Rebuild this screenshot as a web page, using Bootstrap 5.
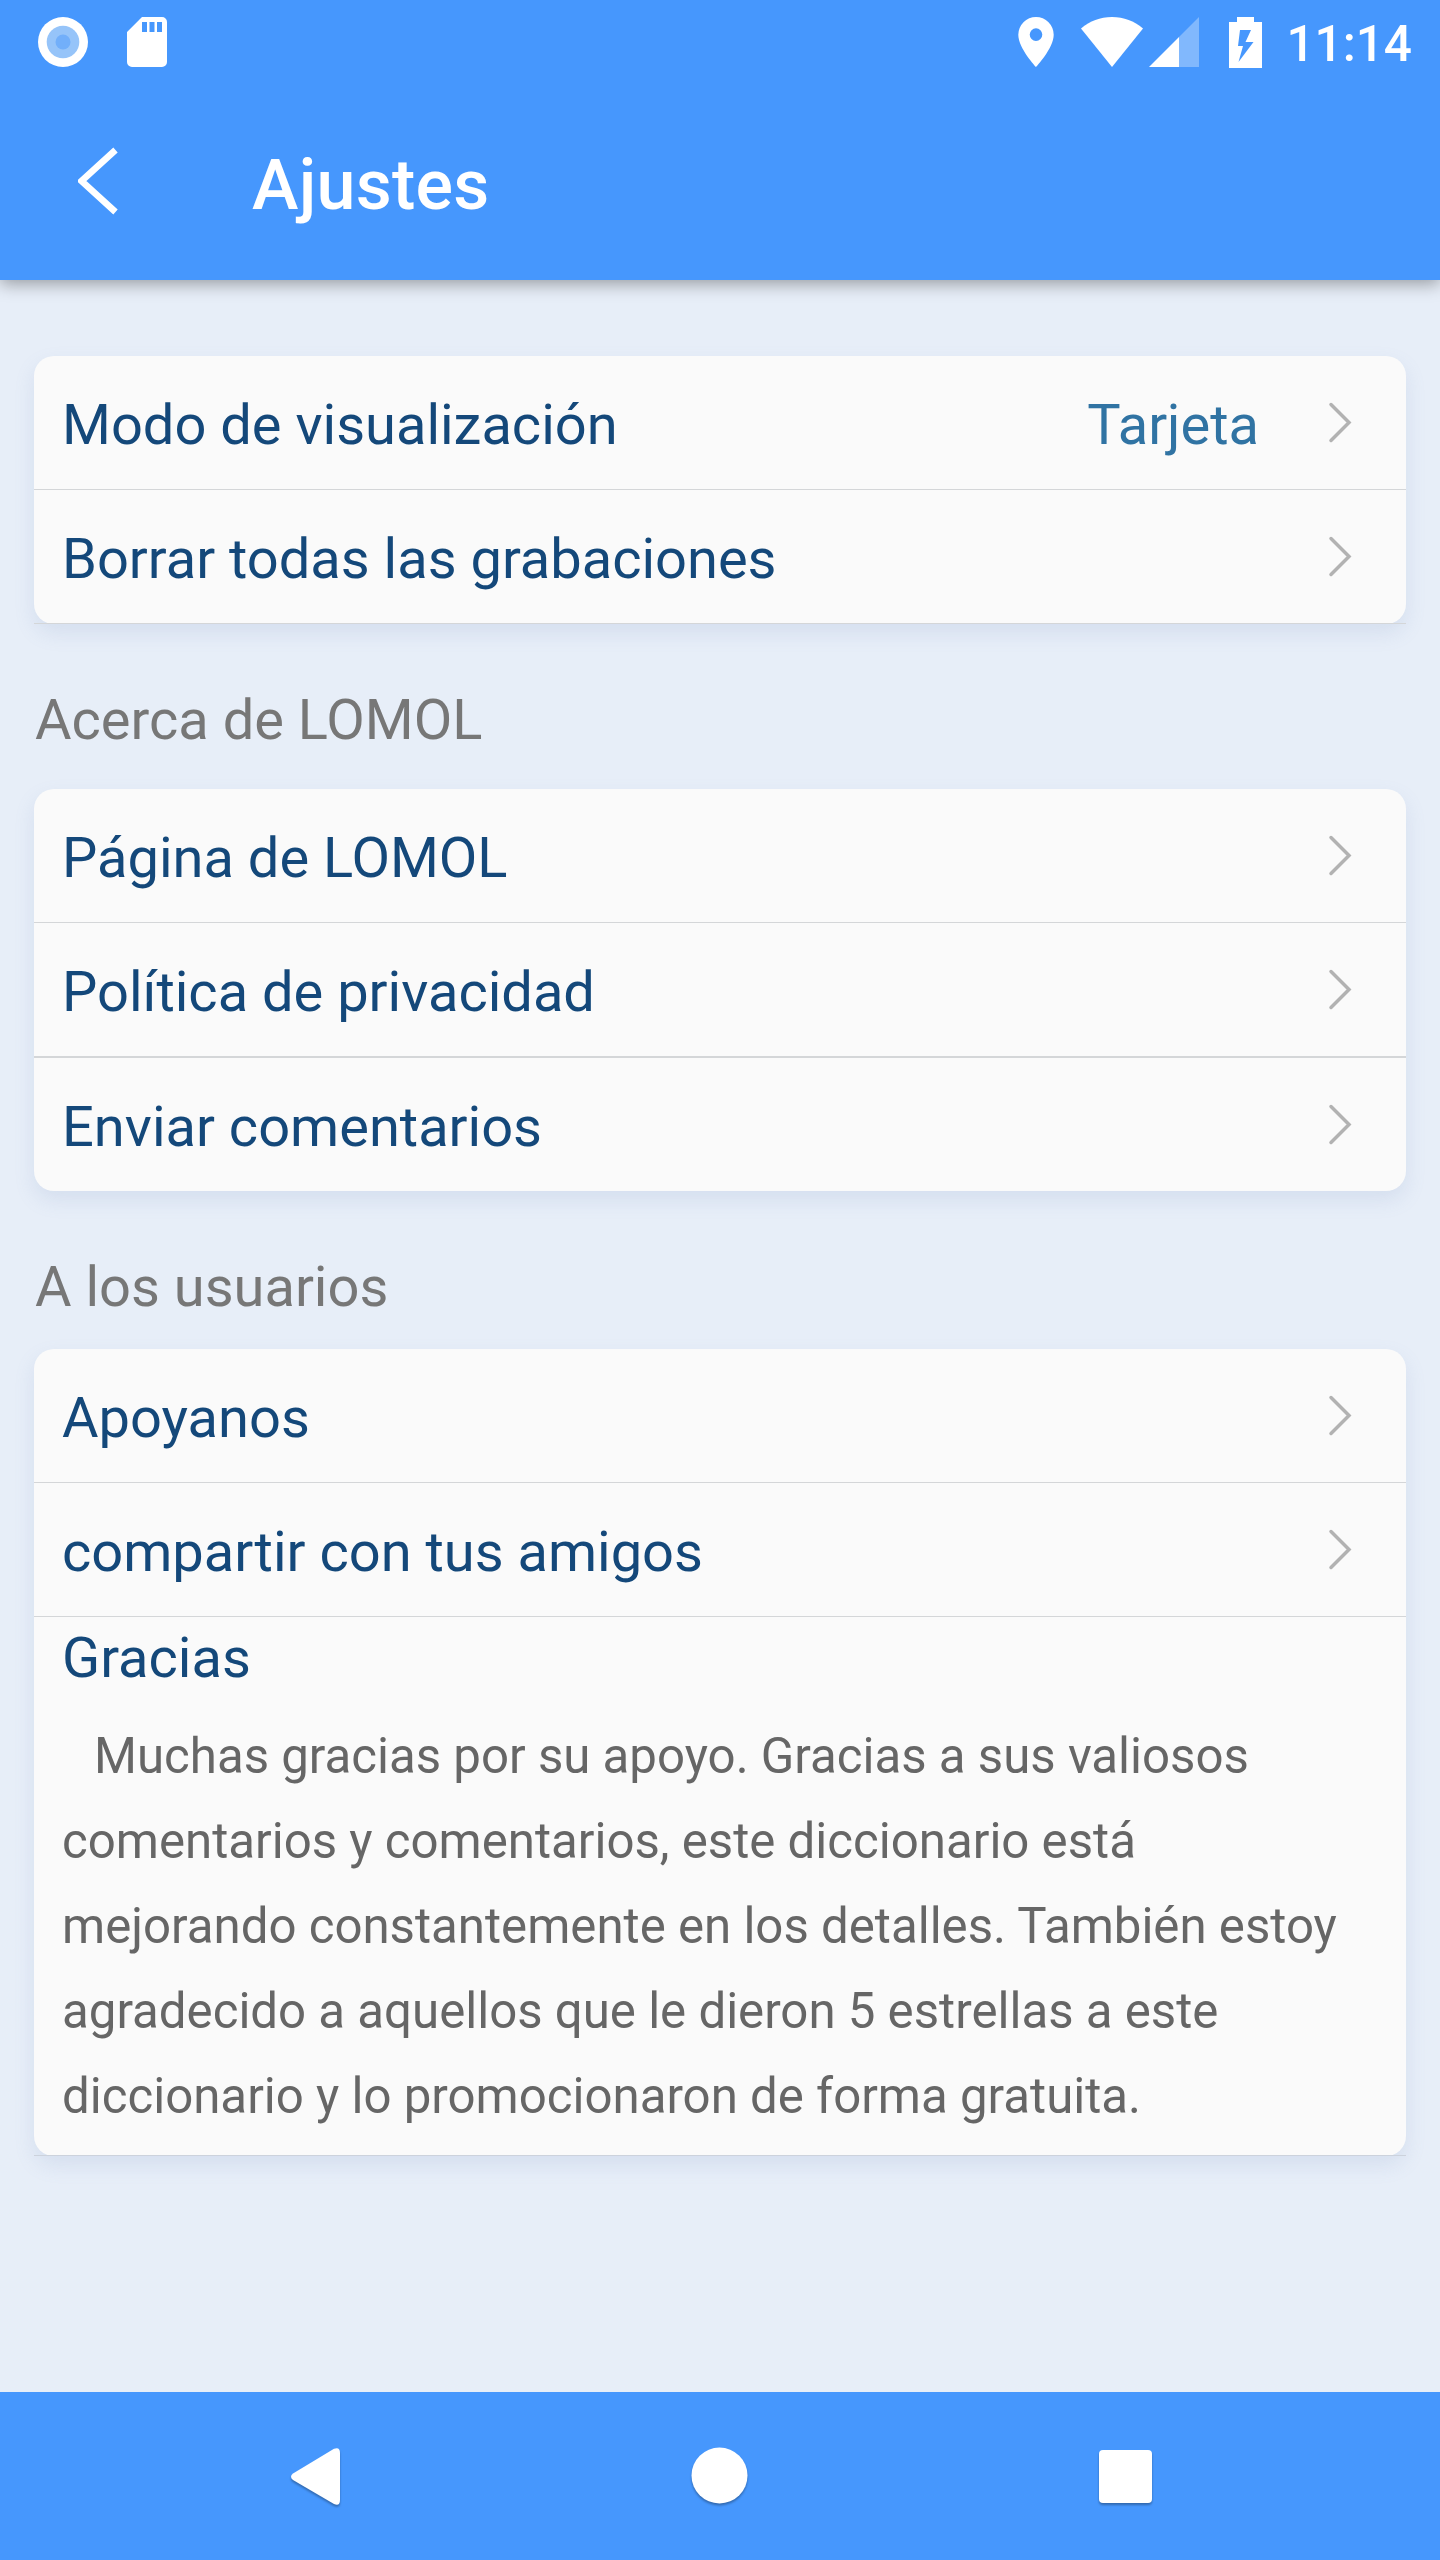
<!DOCTYPE html>
<html lang="es">
<head>
<meta charset="utf-8">
<meta name="viewport" content="width=device-width, initial-scale=1">
<title>Ajustes</title>
<link href="https://cdn.jsdelivr.net/npm/bootstrap@5.3.0/dist/css/bootstrap.min.css" rel="stylesheet">
<style>
body{font-family:Roboto,"Noto Sans",sans-serif;background:#e7eef8;height:2560px;width:1440px;overflow:hidden}
svg{display:block;flex:none}
.app-top{height:280px;background:#4697fd;box-shadow:0 4px 16px rgba(0,0,0,.35);color:#fff}
.status-bar{height:84px;padding:0 28px 0 38px}
.sd-icon{margin-left:39px}
.wifi-icon{margin-left:27px}
.signal-icon{margin-left:6px}
.battery-icon{margin-left:30px}
.clock{font-size:49.500px;line-height:80px;font-weight:500;margin-left:24px;padding-top:4px}
.title-bar{height:196px;padding-left:78px}
.page-title{font-size:70px;line-height:82px;font-weight:500;margin:60px 0 0 132px;letter-spacing:.25px}
.settings{padding:76px 34px 0}
.panel{background:#fafafa;border-radius:20px;box-shadow:0 9px 20px rgba(120,145,190,.16)}
.entry{height:134px;padding:0 54px 0 28px;font-size:56px;line-height:66px;color:#14487a;border-bottom:1px solid #d4d6d8}
.entry span{margin-top:4px}
.entry.plain{border-bottom:0;height:133px}
.entry.thick{border-bottom-width:2px;height:135px}
.entry path{fill:none;stroke:#b2b2b2;stroke-width:3.500;stroke-linecap:round}
.chosen{color:#3073a3;margin-right:69px}
.group-title{font-size:56px;line-height:66px;font-weight:400;color:#777;margin:63px 0 36px;padding-left:1px}
.group-title.tight{margin-bottom:29px}
.thanks{height:539px;border-bottom:1px solid #ccd2dc}
.thanks-title{font-size:56px;line-height:66px;font-weight:400;color:#14487a;padding:8px 28px 0;margin:0}
.thanks-text{font-size:49.200px;line-height:85px;color:#666;margin:0;padding:23px 28px 0;white-space:pre;text-indent:32px}
.thanks-text span{display:block;text-indent:0}
.nav-keys{height:168px;background:#4697fd}
.nav-keys g{filter:drop-shadow(0 2px 1px rgba(0,0,0,.3))}
</style>
</head>
<body class="d-flex flex-column">
<header class="app-top flex-shrink-0">
  <div class="status-bar d-flex align-items-center">
    <svg width="50" height="50" viewBox="0 0 50 50"><circle cx="25" cy="25" r="25" fill="#fff"/><circle cx="25" cy="25" r="16.300" fill="#96c4f9"/><circle cx="25" cy="25" r="7.500" fill="#72affa"/></svg>
    <svg class="sd-icon" width="40" height="50" viewBox="0 0 40 50"><path fill="#fff" fill-rule="evenodd" d="M15 0H35a5 5 0 0 1 5 5V45a5 5 0 0 1-5 5H5a5 5 0 0 1-5-5V15ZM15 5v10h5V5ZM22.500 5v10h5V5ZM30 5v10h5V5Z"/></svg>
    <svg class="ms-auto" width="36" height="50" viewBox="0 0 36 50"><path fill="#fff" fill-rule="evenodd" d="M18 0A17.700 17.700 0 0 0 .3 17.700C.3 31 18 50 18 50S35.700 31 35.700 17.700A17.700 17.700 0 0 0 18 0ZM18 11.300a6.300 6.300 0 1 1 0 12.600a6.300 6.300 0 0 1 0-12.600Z"/></svg>
    <svg class="wifi-icon" width="62" height="50" viewBox="0 0 62 50"><path fill="#fff" d="M0 11.500C9 4 19 0 31 0s22 4 31 11.500L31 50Z"/></svg>
    <svg class="signal-icon" width="50" height="50" viewBox="0 0 50 50"><path fill="#fff" opacity=".32" d="M50 0V50H30V20Z"/><path fill="#fff" d="M0 50 30 20V50Z"/></svg>
    <svg class="battery-icon" width="33" height="51" viewBox="0 0 33 51"><path fill="#fff" fill-rule="evenodd" d="M8 0H25V5H33V51H0V5H8ZM11 13 9 29h5L9.500 45 24.500 25h-8L22 13Z"/></svg>
    <span class="clock">11:14</span>
  </div>
  <div class="title-bar d-flex">
    <svg class="mt-1" width="42" height="136" viewBox="0 0 42 136"><path d="M37.500 62 3.500 93 37.500 124" fill="none" stroke="#fff" stroke-width="6.500"/></svg>
    <h1 class="page-title">Ajustes</h1>
  </div>
</header>
<main class="settings flex-grow-1">
  <section class="panel">
    <div class="entry d-flex align-items-center"><span>Modo de visualización</span><span class="chosen ms-auto">Tarjeta</span><svg width="24" height="42" viewBox="0 0 24 42"><path d="M3 2.500 21 20.500 3 38.500"/></svg></div>
    <div class="entry d-flex align-items-center"><span>Borrar todas las grabaciones</span><svg class="ms-auto" width="24" height="42" viewBox="0 0 24 42"><path d="M3 2.500 21 20.500 3 38.500"/></svg></div>
  </section>
  <h2 class="group-title">Acerca de LOMOL</h2>
  <section class="panel">
    <div class="entry d-flex align-items-center"><span>Página de LOMOL</span><svg class="ms-auto" width="24" height="42" viewBox="0 0 24 42"><path d="M3 2.500 21 20.500 3 38.500"/></svg></div>
    <div class="entry thick d-flex align-items-center"><span>Política de privacidad</span><svg class="ms-auto" width="24" height="42" viewBox="0 0 24 42"><path d="M3 2.500 21 20.500 3 38.500"/></svg></div>
    <div class="entry plain d-flex align-items-center"><span>Enviar comentarios</span><svg class="ms-auto" width="24" height="42" viewBox="0 0 24 42"><path d="M3 2.500 21 20.500 3 38.500"/></svg></div>
  </section>
  <h2 class="group-title tight">A los usuarios</h2>
  <section class="panel">
    <div class="entry d-flex align-items-center"><span>Apoyanos</span><svg class="ms-auto" width="24" height="42" viewBox="0 0 24 42"><path d="M3 2.500 21 20.500 3 38.500"/></svg></div>
    <div class="entry d-flex align-items-center"><span>compartir con tus amigos</span><svg class="ms-auto" width="24" height="42" viewBox="0 0 24 42"><path d="M3 2.500 21 20.500 3 38.500"/></svg></div>
    <div class="thanks">
      <h3 class="thanks-title">Gracias</h3>
      <p class="thanks-text">Muchas gracias por su apoyo. Gracias a sus valiosos<span>comentarios y comentarios, este diccionario está
mejorando constantemente en los detalles. También estoy
agradecido a aquellos que le dieron 5 estrellas a este
diccionario y lo promocionaron de forma gratuita.</span></p>
    </div>
  </section>
</main>
<footer class="nav-keys flex-shrink-0">
  <svg width="1440" height="168" viewBox="0 2392 1440 168"><g fill="#fff"><path d="M293 2473.500 334 2448.800Q340 2446.500 340 2453V2500Q340 2506.500 334 2504L293 2480Q289 2476.500 293 2473.500Z"/><circle cx="719.500" cy="2475.500" r="28"/><rect x="1099" y="2450" width="53" height="53" rx="4"/></g></svg>
</footer>
<script src="https://cdn.jsdelivr.net/npm/bootstrap@5.3.0/dist/js/bootstrap.bundle.min.js"></script>
</body>
</html>
